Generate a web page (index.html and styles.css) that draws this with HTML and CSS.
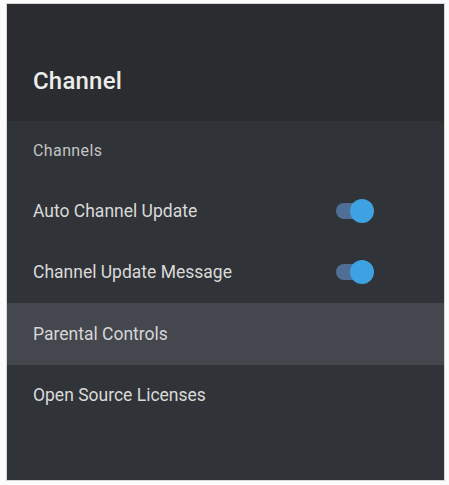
FILE: index.html
```html
<!DOCTYPE html>
<html lang="en">
<head>
<meta charset="utf-8">
<link rel="stylesheet" href="styles.css">
</head>
<body>
<div class="panel">
  <header class="head"><h1 class="title">Channel</h1></header>
  <ul class="list">
    <li class="row cat">Channels</li>
    <li class="row"><span>Auto Channel Update</span><span class="toggle"><span class="knob"></span></span></li>
    <li class="row"><span>Channel Update Message</span><span class="toggle"><span class="knob"></span></span></li>
    <li class="row sel">Parental Controls</li>
    <li class="row">Open Source Licenses</li>
  </ul>
</div>
</body>
</html>
```
FILE: styles.css
```css
html, body { margin: 0; padding: 0; background: #fbfbfb; }
body { padding: 4px 5px 5px 7px; font-family: Roboto, "Liberation Sans", sans-serif; }
.panel {
  width: 437px; height: 476px;
  background: #303337;
  display: flex; flex-direction: column;
  box-shadow: 0 0 0 1px #d6d6d6;
}
.head {
  height: 117px; background: #2a2c2f;
  display: flex; align-items: flex-start;
  padding-left: 26px; box-sizing: border-box;
}
.title {
  margin: 61px 0 0; font-size: 24px; font-weight: 500;
  color: #ececec; line-height: 32px; letter-spacing: 0.2px;
}
.list { list-style: none; margin: 0; padding: 0; }
.row {
  height: 61.5px; display: flex; align-items: center; justify-content: space-between;
  padding: 0 76px 0 26px; color: #dadada; font-size: 17.5px;
}
.row:first-child { height: 59px; }
.cat { font-size: 16px; color: #c4c4c4; letter-spacing: 0.4px; }
.sel { background: #44474d; color: #d6d6d8; }
.toggle {
  position: relative; width: 32px; height: 16px; border-radius: 8px;
  background: #4f6f96;
}
.knob {
  position: absolute; right: -6px; top: -4px;
  width: 24px; height: 24px; border-radius: 50%;
  background: #3ea2e2;
}
```
